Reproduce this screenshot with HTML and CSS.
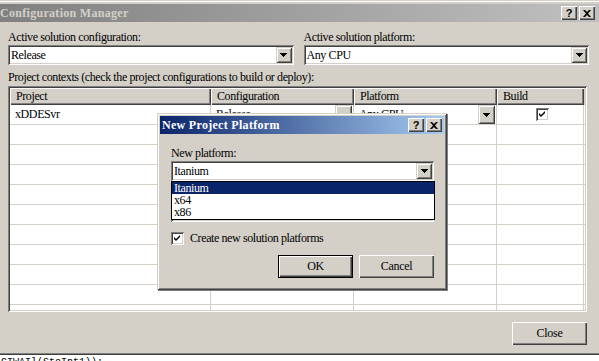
FILE: index.html
```html
<!DOCTYPE html>
<html lang="en">
<head>
    <meta charset="UTF-8">
    <title>Configuration Manager</title>
    <link rel="stylesheet" href="styles.css">
</head>
<body>
    <div class="window">
        <div class="titlebar inactive">
            <span class="title">Configuration Manager</span>
            <div class="caption-btns">
                <span class="cap-btn">?</span>
                <span class="cap-btn">
                    <svg width="8" height="7" viewBox="0 0 8 7"><path d="M0 0h2l2 2 2-2h2L5 3.5 8 7H6L4 5 2 7H0l3-3.5z" fill="#000"/></svg>
                </span>
            </div>
        </div>

        <div class="content">
            <div class="solution-row">
                <div class="field">
                    <div class="label">Active solution configuration:</div>
                    <div class="combo">
                        <span class="combo-text">Release</span>
                        <span class="drop-btn"><svg width="7" height="4" viewBox="0 0 7 4"><path d="M0 0h7v1h-1v1h-1v1h-1v1h-1v-1h-1v-1h-1v-1h-1z" fill="#000"/></svg></span>
                    </div>
                </div>
                <div class="field">
                    <div class="label">Active solution platform:</div>
                    <div class="combo">
                        <span class="combo-text">Any CPU</span>
                        <span class="drop-btn"><svg width="7" height="4" viewBox="0 0 7 4"><path d="M0 0h7v1h-1v1h-1v1h-1v1h-1v-1h-1v-1h-1v-1h-1z" fill="#000"/></svg></span>
                    </div>
                </div>
            </div>

            <div class="label contexts">Project contexts (check the project configurations to build or deploy):</div>

            <div class="grid">
                <div class="grid-row head">
                    <div class="head-cell">Project</div>
                    <div class="head-cell">Configuration</div>
                    <div class="head-cell">Platform</div>
                    <div class="head-cell">Build</div>
                    <div class="head-fill"></div>
                </div>
                <div class="grid-body">
                    <div class="grid-row">
                        <div class="cell">xDDESvr</div>
                        <div class="cell cell-combo">Release<span class="drop-btn cell-drop"><svg width="7" height="4" viewBox="0 0 7 4"><path d="M0 0h7v1h-1v1h-1v1h-1v1h-1v-1h-1v-1h-1v-1h-1z" fill="#000"/></svg></span></div>
                        <div class="cell cell-combo">Any CPU<span class="drop-btn cell-drop"><svg width="7" height="4" viewBox="0 0 7 4"><path d="M0 0h7v1h-1v1h-1v1h-1v1h-1v-1h-1v-1h-1v-1h-1z" fill="#000"/></svg></span></div>
                        <div class="cell cell-check"><span class="checkbox"><svg width="9" height="9" viewBox="0 0 9 9"><path d="M1 3l2 2 4-4v2l-4 4-2-2z" fill="#000"/></svg></span></div>
                        <div class="cell-fill"></div>
                    </div>
                    <div class="grid-row"><div class="cell"></div><div class="cell"></div><div class="cell"></div><div class="cell"></div><div class="cell-fill"></div></div>
                    <div class="grid-row"><div class="cell"></div><div class="cell"></div><div class="cell"></div><div class="cell"></div><div class="cell-fill"></div></div>
                    <div class="grid-row"><div class="cell"></div><div class="cell"></div><div class="cell"></div><div class="cell"></div><div class="cell-fill"></div></div>
                    <div class="grid-row"><div class="cell"></div><div class="cell"></div><div class="cell"></div><div class="cell"></div><div class="cell-fill"></div></div>
                    <div class="grid-row"><div class="cell"></div><div class="cell"></div><div class="cell"></div><div class="cell"></div><div class="cell-fill"></div></div>
                    <div class="grid-row"><div class="cell"></div><div class="cell"></div><div class="cell"></div><div class="cell"></div><div class="cell-fill"></div></div>
                    <div class="grid-row"><div class="cell"></div><div class="cell"></div><div class="cell"></div><div class="cell"></div><div class="cell-fill"></div></div>
                    <div class="grid-row"><div class="cell"></div><div class="cell"></div><div class="cell"></div><div class="cell"></div><div class="cell-fill"></div></div>
                    <div class="grid-row"><div class="cell"></div><div class="cell"></div><div class="cell"></div><div class="cell"></div><div class="cell-fill"></div></div>
                    <div class="grid-row"><div class="cell"></div><div class="cell"></div><div class="cell"></div><div class="cell"></div><div class="cell-fill"></div></div>
                </div>
            </div>

            <div class="footer">
                <div class="btn close-btn">Close</div>
            </div>
        </div>

        <!-- modal over the grid -->
        <div class="dialog">
            <div class="titlebar active">
                <span class="title">New Project Platform</span>
                <div class="caption-btns">
                    <span class="cap-btn">?</span>
                    <span class="cap-btn">
                        <svg width="8" height="7" viewBox="0 0 8 7"><path d="M0 0h2l2 2 2-2h2L5 3.5 8 7H6L4 5 2 7H0l3-3.5z" fill="#000"/></svg>
                    </span>
                </div>
            </div>
            <div class="dialog-body">
                <div class="label">New platform:</div>
                <div class="combo dlg-combo">
                    <span class="combo-text">Itanium</span>
                    <span class="drop-btn"><svg width="7" height="4" viewBox="0 0 7 4"><path d="M0 0h7v1h-1v1h-1v1h-1v1h-1v-1h-1v-1h-1v-1h-1z" fill="#000"/></svg></span>
                    <div class="drop-list">
                        <div class="drop-item selected">Itanium</div>
                        <div class="drop-item">x64</div>
                        <div class="drop-item">x86</div>
                    </div>
                </div>
                <!-- second field sits under the open list -->
                <div class="label copy-label"></div>
                <div class="combo dlg-combo">
                    <span class="combo-text"></span>
                    <span class="drop-btn"><svg width="7" height="4" viewBox="0 0 7 4"><path d="M0 0h7v1h-1v1h-1v1h-1v1h-1v-1h-1v-1h-1v-1h-1z" fill="#000"/></svg></span>
                </div>
                <div class="check-row">
                    <span class="checkbox"><svg width="9" height="9" viewBox="0 0 9 9"><path d="M1 3l2 2 4-4v2l-4 4-2-2z" fill="#000"/></svg></span>
                    <span>Create new solution platforms</span>
                </div>
                <div class="dlg-buttons">
                    <div class="btn default">OK</div>
                    <div class="btn">Cancel</div>
                </div>
            </div>
        </div>
    </div>
    <div class="code-strip">CIWAIl(StoInt1));</div>
</body>
</html>
```

FILE: styles.css
```css
/* classic windows dialog look */
body {
    margin: 0;
    padding: 0;
    width: 599px;
    height: 361px;
    overflow: hidden;
    background-color: #fff;
    font-family: "Liberation Serif", "DejaVu Serif", serif;
    font-size: 12px;
    color: #000;
}
.window {
    position: relative;
    height: 355px;
    box-sizing: border-box;
    background-color: #d4d0c8;
    border-top: 1px solid #d4d0c8;
    border-bottom: 1px solid #404040;
    box-shadow: inset 0 1px #fff, inset 0 -1px #808080;
    padding-top: 3px;
}
.titlebar {
    height: 18px;
    display: flex;
    align-items: center;
    justify-content: space-between;
    padding-right: 4px;
}
.titlebar.inactive {
    background: linear-gradient(to right, #808080, #c0c0c0);
    color: #d4d0c8;
}
.titlebar.active {
    background: linear-gradient(to right, #0a246a, #a6caf0);
    color: #fff;
    padding-left: 2px;
    padding-right: 2px;
}
.title {
    font-weight: bold;
    letter-spacing: 0.3px;
    white-space: nowrap;
}
.caption-btns {
    display: flex;
    gap: 2px;
}
.cap-btn {
    width: 16px;
    height: 14px;
    box-sizing: border-box;
    display: flex;
    align-items: center;
    justify-content: center;
    background-color: #d4d0c8;
    box-shadow: inset 1px 1px #fff, inset -1px -1px #404040, inset -2px -2px #808080;
    font-family: "Liberation Sans", sans-serif;
    font-weight: bold;
    font-size: 11px;
    color: #000;
}
.content {
    padding: 8px 10px 0 8px;
}
.label {
    line-height: 15px;
    min-height: 15px;
    white-space: nowrap;
    letter-spacing: -0.4px;
}
.solution-row {
    display: grid;
    grid-template-columns: 1fr 1fr;
    gap: 10px;
}
.combo {
    position: relative;
    height: 20px;
    box-sizing: border-box;
    background-color: #fff;
    box-shadow: inset 1px 1px #808080, inset -1px -1px #fff, inset 2px 2px #404040, inset -2px -2px #d4d0c8;
    display: flex;
    align-items: center;
    justify-content: space-between;
    padding: 2px 2px 2px 3px;
}
.combo-text {
    letter-spacing: -0.4px;
}
.drop-btn {
    width: 16px;
    height: 16px;
    box-sizing: border-box;
    display: flex;
    align-items: center;
    justify-content: center;
    background-color: #d4d0c8;
    box-shadow: inset 1px 1px #d4d0c8, inset -1px -1px #404040, inset 2px 2px #fff, inset -2px -2px #808080;
}
.contexts {
    margin-top: 5px;
}
.grid {
    margin-top: 1px;
    margin-right: 2px;
    height: 226px;
    box-sizing: border-box;
    padding: 2px;
    background-color: #fff;
    box-shadow: inset 1px 1px #808080, inset -1px -1px #fff, inset 2px 2px #404040, inset -2px -2px #d4d0c8;
    display: flex;
    flex-direction: column;
}
.grid-row {
    display: grid;
    grid-template-columns: 201px 143px 143px 87px 1fr;
    height: 20px;
}
.grid-row.head {
    height: 17px;
    background-color: #d4d0c8;
}
.head-cell {
    box-shadow: inset 1px 1px #fff, inset -1px -1px #404040, inset -2px -2px #808080;
    padding: 1px 0 0 6px;
    line-height: 14px;
    letter-spacing: -0.4px;
}
.head-fill {
    background-color: #d4d0c8;
}
.grid-body {
    flex: 1;
    overflow: hidden;
}
.cell {
    position: relative;
    border-right: 1px solid #d4d0c8;
    border-bottom: 1px solid #d4d0c8;
    padding-left: 5px;
    line-height: 19px;
    letter-spacing: -0.4px;
    white-space: nowrap;
}
.cell-fill {
    border-bottom: 1px solid #d4d0c8;
}
.cell-combo {
    display: flex;
    justify-content: space-between;
    padding-right: 1px;
}
.cell-drop {
    height: 19px;
    width: 17px;
}
.cell-check {
    display: flex;
    align-items: center;
    justify-content: center;
}
.checkbox {
    width: 13px;
    height: 13px;
    box-sizing: border-box;
    display: flex;
    align-items: center;
    justify-content: center;
    background-color: #fff;
    box-shadow: inset 1px 1px #808080, inset -1px -1px #fff, inset 2px 2px #404040, inset -2px -2px #d4d0c8;
}
.footer {
    display: flex;
    justify-content: flex-end;
    margin-top: 10px;
    padding-right: 2px;
}
.btn {
    width: 75px;
    height: 23px;
    box-sizing: border-box;
    display: flex;
    align-items: center;
    justify-content: center;
    background-color: #d4d0c8;
    box-shadow: inset 1px 1px #fff, inset -1px -1px #404040, inset -2px -2px #808080;
    letter-spacing: -0.3px;
}
.btn.default {
    border: 1px solid #000;
}
.dialog {
    position: absolute;
    left: 157px;
    top: 112px;
    width: 290px;
    height: 177px;
    box-sizing: border-box;
    padding: 3px;
    background-color: #d4d0c8;
    box-shadow: inset 1px 1px #d4d0c8, inset -1px -1px #404040, inset 2px 2px #fff, inset -2px -2px #808080, 1px 1px 0 #808080;
}
.dialog-body {
    padding: 12px 10px 0 11px;
}
.dlg-combo {
    height: 20px;
}
.drop-list {
    position: absolute;
    top: 20px;
    left: 0;
    right: -1px;
    z-index: 2;
    background-color: #fff;
    border: 1px solid #000;
    padding-bottom: 1px;
}
.drop-item {
    height: 12px;
    line-height: 12px;
    padding-left: 2px;
    letter-spacing: -0.4px;
}
.drop-item.selected {
    background-color: #0a246a;
    color: #fff;
}
.copy-label {
    margin-top: 6px;
}
.check-row {
    display: flex;
    align-items: center;
    gap: 6px;
    margin-top: 9px;
    line-height: 15px;
    letter-spacing: -0.4px;
}
.dlg-buttons {
    display: flex;
    justify-content: flex-end;
    gap: 6px;
    margin-top: 9px;
}
.code-strip {
    font-family: "Liberation Mono", monospace;
    font-size: 10px;
    line-height: 12px;
    padding-left: 1px;
    margin-top: 2px;
    white-space: nowrap;
}
```
